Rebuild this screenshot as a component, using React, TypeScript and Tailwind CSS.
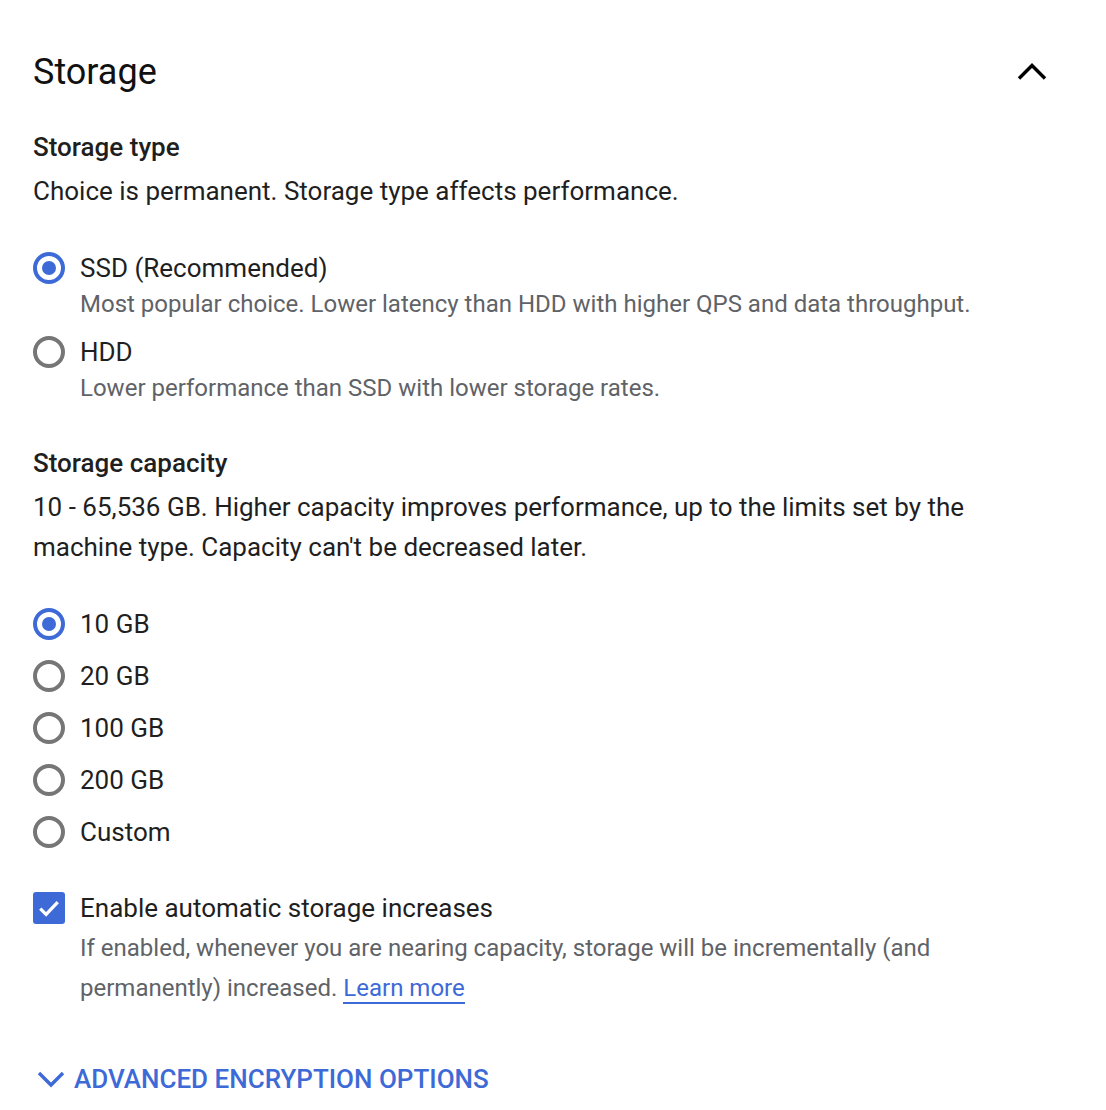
import React from "react";

const BLUE = "#3d6ad6";

function Radio({ checked }: { checked?: boolean }) {
  return checked ? (
    <span className="flex h-[32px] w-[32px] shrink-0 items-center justify-center rounded-full border-[4px] border-[#3d6ad6]">
      <span className="h-[14px] w-[14px] rounded-full bg-[#3d6ad6]" />
    </span>
  ) : (
    <span className="h-[32px] w-[32px] shrink-0 rounded-full border-[4px] border-[#767676]" />
  );
}

function RadioRow({ label, desc, checked }: { label: string; desc?: string; checked?: boolean }) {
  return (
    <div className="flex flex-col">
      <div className="flex h-[52px] items-center gap-[15px]">
        <Radio checked={checked} />
        <span className="text-[26px] text-[#1f1f1f]">{label}</span>
      </div>
      {desc && (
        <div className="-mt-[6px] pl-[47px] text-[24px] leading-[32px] text-[#5f6368]">{desc}</div>
      )}
    </div>
  );
}

export default function App() {
  return (
    <div
      className="min-h-[1110px] w-[1106px] bg-white pl-[33px] pr-[60px] pt-[50px] text-[#1f1f1f]"
      style={{ fontFamily: "Roboto, 'Noto Sans', sans-serif" }}
    >
      <div className="flex h-[44px] items-center justify-between">
        <h1 className="text-[36px] leading-[44px] font-normal text-[#111]">Storage</h1>
        <svg width="30" height="18" viewBox="0 0 30 18" className="mr-[-1px]">
          <path d="M2 15.5 L15 2.5 L28 15.5" fill="none" stroke="#000" strokeWidth="3.4" />
        </svg>
      </div>
      <div className="mt-[37px] text-[26px] leading-[32px] font-medium">Storage type</div>
      <div className="mt-[12px] text-[26px] leading-[32px]">
        Choice is permanent. Storage type affects performance.
      </div>
      <div className="mt-[35px] flex flex-col">
        <RadioRow
          checked
          label="SSD (Recommended)"
          desc="Most popular choice. Lower latency than HDD with higher QPS and data throughput."
        />
        <div className="h-[6px]" />
        <RadioRow label="HDD" desc="Lower performance than SSD with lower storage rates." />
      </div>
      <div className="mt-[43px] text-[26px] leading-[32px] font-medium">Storage capacity</div>
      <div className="mt-[8px] text-[26px] leading-[40px]">
        10 - 65,536 GB. Higher capacity improves performance, up to the limits set by the
        <br />
        machine type. Capacity can't be decreased later.
      </div>
      <div className="mt-[31px] flex flex-col">
        <RadioRow checked label="10 GB" />
        <RadioRow label="20 GB" />
        <RadioRow label="100 GB" />
        <RadioRow label="200 GB" />
        <RadioRow label="Custom" />
      </div>
      <div className="mt-[34px] flex items-center gap-[15px]">
        <span className="flex h-[32px] w-[32px] shrink-0 items-center justify-center rounded-[3px] bg-[#3d6ad6]">
          <svg width="28" height="28" viewBox="0 0 24 24">
            <path d="M4.5 12.5 L9.5 17.5 L19.5 7" fill="none" stroke="#fff" strokeWidth="2.8" />
          </svg>
        </span>
        <span className="text-[26px] leading-[32px]">Enable automatic storage increases</span>
      </div>
      <div className="mt-[4px] pl-[47px] text-[24px] leading-[40px] text-[#5f6368]">
        If enabled, whenever you are nearing capacity, storage will be incrementally (and
        <br />
        permanently) increased.{" "}
        <a className="border-b-2 border-[#3d6ad6] text-[#3d6ad6]" href="#">
          Learn more
        </a>
      </div>
      <div className="mt-[55px] flex items-center gap-[9px] pl-[4px]">
        <svg width="28" height="18" viewBox="0 0 28 18">
          <path d="M2 3 L14 15 L26 3" fill="none" stroke={BLUE} strokeWidth="3.4" />
        </svg>
        <span className="text-[26px] leading-[32px] font-medium text-[#3d6ad6] uppercase">
          Advanced encryption options
        </span>
      </div>
    </div>
  );
}
